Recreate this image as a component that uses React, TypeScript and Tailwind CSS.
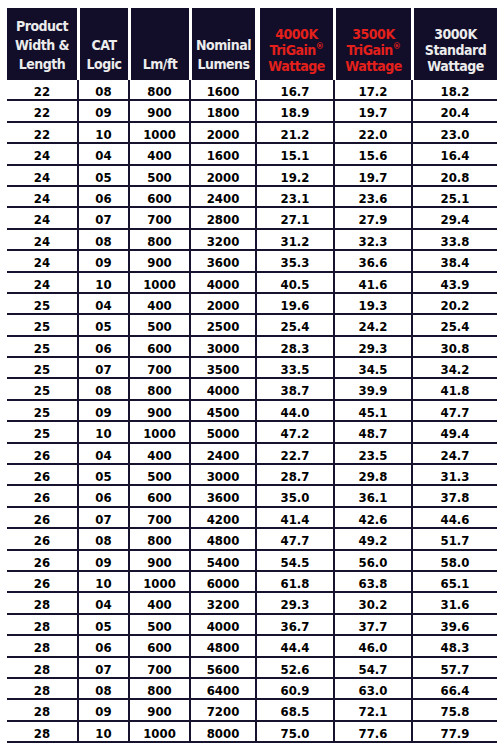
import React from 'react';

type Row = [string, string, string, string, string, string, string];

const ROWS: Row[] = [
  ['22', '08', '800', '1600', '16.7', '17.2', '18.2'],
  ['22', '09', '900', '1800', '18.9', '19.7', '20.4'],
  ['22', '10', '1000', '2000', '21.2', '22.0', '23.0'],
  ['24', '04', '400', '1600', '15.1', '15.6', '16.4'],
  ['24', '05', '500', '2000', '19.2', '19.7', '20.8'],
  ['24', '06', '600', '2400', '23.1', '23.6', '25.1'],
  ['24', '07', '700', '2800', '27.1', '27.9', '29.4'],
  ['24', '08', '800', '3200', '31.2', '32.3', '33.8'],
  ['24', '09', '900', '3600', '35.3', '36.6', '38.4'],
  ['24', '10', '1000', '4000', '40.5', '41.6', '43.9'],
  ['25', '04', '400', '2000', '19.6', '19.3', '20.2'],
  ['25', '05', '500', '2500', '25.4', '24.2', '25.4'],
  ['25', '06', '600', '3000', '28.3', '29.3', '30.8'],
  ['25', '07', '700', '3500', '33.5', '34.5', '34.2'],
  ['25', '08', '800', '4000', '38.7', '39.9', '41.8'],
  ['25', '09', '900', '4500', '44.0', '45.1', '47.7'],
  ['25', '10', '1000', '5000', '47.2', '48.7', '49.4'],
  ['26', '04', '400', '2400', '22.7', '23.5', '24.7'],
  ['26', '05', '500', '3000', '28.7', '29.8', '31.3'],
  ['26', '06', '600', '3600', '35.0', '36.1', '37.8'],
  ['26', '07', '700', '4200', '41.4', '42.6', '44.6'],
  ['26', '08', '800', '4800', '47.7', '49.2', '51.7'],
  ['26', '09', '900', '5400', '54.5', '56.0', '58.0'],
  ['26', '10', '1000', '6000', '61.8', '63.8', '65.1'],
  ['28', '04', '400', '3200', '29.3', '30.2', '31.6'],
  ['28', '05', '500', '4000', '36.7', '37.7', '39.6'],
  ['28', '06', '600', '4800', '44.4', '46.0', '48.3'],
  ['28', '07', '700', '5600', '52.6', '54.7', '57.7'],
  ['28', '08', '800', '6400', '60.9', '63.0', '66.4'],
  ['28', '09', '900', '7200', '68.5', '72.1', '75.8'],
  ['28', '10', '1000', '8000', '75.0', '77.6', '77.9'],
];

const font = { fontFamily: '"DejaVu Sans Condensed", "DejaVu Sans", sans-serif' };

const App: React.FC = () => {
  return (
    <div className="min-h-screen bg-white pt-[8px] pl-[7px]" style={font}>
      <div className="w-[490px]">
        {/* Header */}
        <div className="grid grid-cols-[70px_51px_61px_66px_78px_78px_86px] h-[72px] bg-white">
          <div className="bg-[#120d28] flex flex-col justify-end items-center pb-[6px] text-[14px] leading-[19px] font-bold text-[#ececec] tracking-[-0.5px]">
            <span>Product</span>
            <span>Width &amp;</span>
            <span>Length</span>
          </div>
          <div className="bg-[#120d28] border-l-[3px] border-white flex flex-col justify-end items-center pb-[6px] text-[14px] leading-[19px] font-bold text-[#ececec] tracking-[-0.5px]">
            <span>CAT</span>
            <span>Logic</span>
          </div>
          <div className="bg-[#120d28] border-l-[3px] border-white flex flex-col justify-end items-center pb-[6px] text-[14px] leading-[19px] font-bold text-[#ececec] tracking-[-0.5px]">
            <span>Lm/ft</span>
          </div>
          <div className="bg-[#120d28] border-l-[3px] border-white flex flex-col justify-end items-center pb-[6px] text-[14px] leading-[19px] font-bold text-[#ececec] tracking-[-0.5px]">
            <span>Nominal</span>
            <span>Lumens</span>
          </div>
          <div className="bg-[#120d28] border-l-[5px] border-white flex flex-col justify-end items-center pb-[6px] text-[14px] leading-[16px] font-bold text-[#e3201b] tracking-[-0.5px]">
            <span>4000K</span>
            <span>
              TriGain<span className="text-[9px] leading-none align-top">®</span>
            </span>
            <span>Wattage</span>
          </div>
          <div className="bg-[#120d28] border-l-[3px] border-white flex flex-col justify-end items-center pb-[6px] text-[14px] leading-[16px] font-bold text-[#e3201b] tracking-[-0.5px]">
            <span>3500K</span>
            <span>
              TriGain<span className="text-[9px] leading-none align-top">®</span>
            </span>
            <span>Wattage</span>
          </div>
          <div className="bg-[#120d28] border-l-[3px] border-white flex flex-col justify-end items-center pb-[6px] text-[14px] leading-[16px] font-bold text-[#ececec] tracking-[-0.5px]">
            <span>3000K</span>
            <span>Standard</span>
            <span>Wattage</span>
          </div>
        </div>

        {/* Body */}
        {ROWS.map((row, i) => (
          <div
            key={i}
            className="grid grid-cols-[70px_51px_61px_66px_78px_78px_86px] h-[21.4px] border-b-2 border-[#17122d] text-[13px] font-bold text-black"
          >
            {row.map((cell, j) => (
              <div
                key={j}
                className={
                  j === 0
                    ? 'flex items-center justify-center pt-[2px]'
                    : 'flex items-center justify-center pt-[2px] border-l-2 border-[#17122d]'
                }
              >
                {cell}
              </div>
            ))}
          </div>
        ))}
      </div>
    </div>
  );
};

export default App;
